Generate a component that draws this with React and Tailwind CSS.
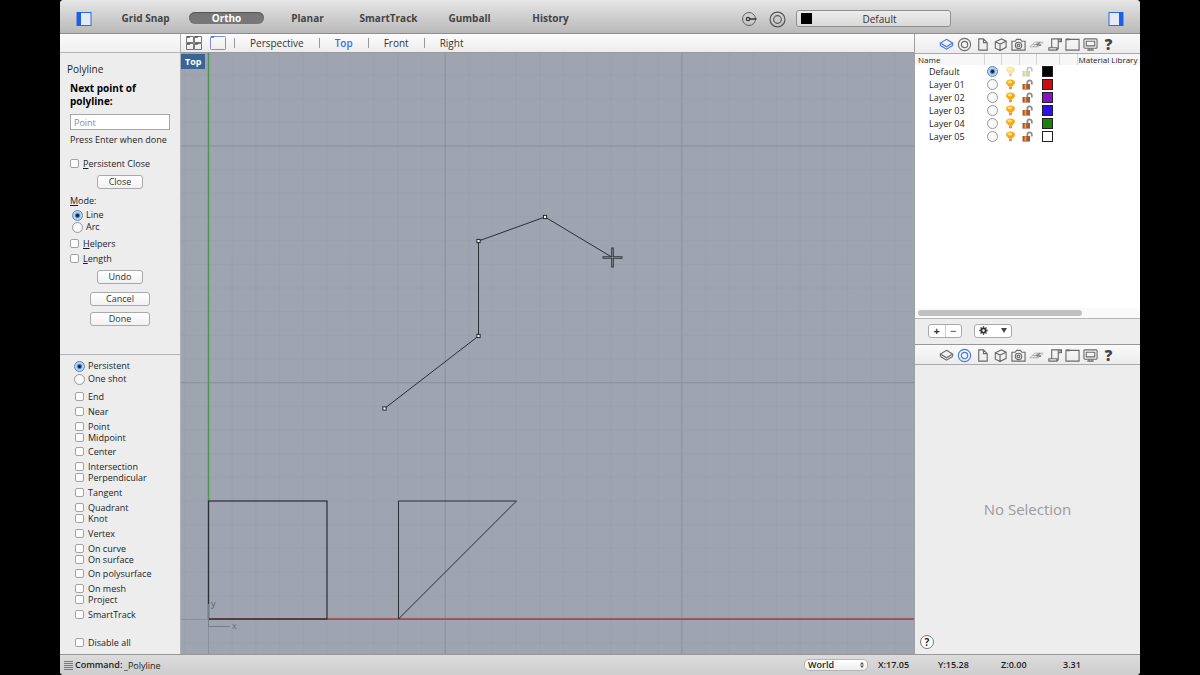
import React, { Fragment } from "react";

const MODES = ["Grid Snap", "Ortho", "Planar", "SmartTrack", "Gumball", "History"];
const VIEWS = ["Perspective", "Top", "Front", "Right"];
const SNAP_GROUPS = [
  ["End"],
  ["Near"],
  ["Point", "Midpoint"],
  ["Center"],
  ["Intersection", "Perpendicular"],
  ["Tangent"],
  ["Quadrant", "Knot"],
  ["Vertex"],
  ["On curve", "On surface"],
  ["On polysurface"],
  ["On mesh", "Project"],
  ["SmartTrack"],
];
const LAYERS = [
  { name: "Default", swatch: "bg-black" },
  { name: "Layer 01", swatch: "bg-[#cc0d10]" },
  { name: "Layer 02", swatch: "bg-[#8614c4]" },
  { name: "Layer 03", swatch: "bg-[#2b12ea]" },
  { name: "Layer 04", swatch: "bg-[#1f8010]" },
  { name: "Layer 05", swatch: "bg-white" },
];

const CHECK =
  "m-0 size-[9px] shrink-0 appearance-none rounded-[2px] border border-[#a2a2a2] bg-white checked:bg-[#6fa5e4]";
const RADIO =
  "m-0 size-[11px] shrink-0 appearance-none rounded-full border border-[#9a9a9a] bg-[radial-gradient(circle,#fff,#f1f1f1)] checked:border-[#5d86b8] checked:bg-[radial-gradient(circle,#10233f_0_1px,#a9d0f8_3px,#c4e0fb_6px)]";
const PUSH =
  "rounded-[3px] border border-[#a9a9a9] bg-linear-to-b from-white to-[#f1f1f1] text-center text-[9px] leading-[12px] text-[#333]";

function Check({ id, label, accessKey }) {
  return (
    <label htmlFor={id} className="flex h-[11px] items-center gap-[4px]">
      <input id={id} type="checkbox" className={CHECK} />
      <span className="whitespace-nowrap leading-[11px]">
        {accessKey ? <span className="underline">{label[0]}</span> : label[0]}
        {label.slice(1)}
      </span>
    </label>
  );
}

function Radio({ id, name, label, checked }) {
  return (
    <label htmlFor={id} className="flex h-[12px] items-center gap-[3px]">
      <input id={id} name={name} type="radio" defaultChecked={checked} className={RADIO} />
      <span className="leading-[12px]">{label}</span>
    </label>
  );
}

function SidebarIcon({ right }) {
  return (
    <svg className="block size-[16px]" viewBox="0 0 16 16" aria-hidden="true">
      <rect x="1" y="1.5" width="14" height="13" fill="#e4ebf7" stroke="#2c6ae0" />
      <rect x={right ? 11 : 1} y="1" width="4" height="14" fill="#1d5fe6" />
    </svg>
  );
}

function Target({ className }) {
  return (
    <svg className={className} viewBox="0 0 16 16" fill="none" stroke="currentColor" strokeWidth="1.1" aria-hidden="true">
      <circle cx="8" cy="8" r="7" />
      <circle cx="8" cy="8" r="3.6" />
    </svg>
  );
}

const PANEL_ICONS = [
  ["Layers", <><path d="M8 2.5 14.5 6.5 8 10.5 1.5 6.5Z" /><path d="M1.5 9 8 13 14.5 9M1.5 6.5V9M14.5 6.5V9" /></>],
  ["Properties", <><circle cx="8" cy="8" r="6.5" /><circle cx="8" cy="8" r="3.4" /></>],
  ["Notes", <path d="M4 2H9L13 6V14H4ZM9 2V6H13" />],
  ["Blocks", <path d="M2.5 5 9 2 14 4.5V11L7.5 14.5 2.5 12ZM2.5 5 7.5 7.5 14 4.5M7.5 7.5V14.5" />],
  ["Named views", <><path d="M1 4.5H4.5L6 2.5H10L11.5 4.5H15V14H1Z" /><circle cx="8" cy="9" r="3.4" /><circle cx="8" cy="9" r="1.4" /></>],
  ["Construction planes", <><path d="M1 10.5 6 5.5H15L10 10.5ZM4.5 10.5 9.5 5.5M7.5 10.5 12.5 5.5M3.5 8H12.5" strokeWidth="0.9" opacity="0.5" /><path d="M8 8.5 11.5 5.5M8 8.5 13 9" strokeWidth="1.3" opacity="0.8" /></>],
  ["Layouts", <path d="M14 5V2H5V11.5H2V14H10.5V11.5H5M10.5 14 12 12.5V2M14 2H15.5V5H12" />],
  ["Viewport", <><path d="M1 2.5H15V14H1Z" /><path d="M1.5 2.5H5" strokeWidth="2" /></>],
  ["Display", <><rect x="1" y="2" width="14" height="10" rx="1" /><path d="M3.5 4.5H12.5V9.5H3.5ZM4.5 14H11.5M6.5 12V14M9.5 12V14" /></>],
  ["Help", null],
];

function PanelTabs({ active }) {
  return (
    <nav className="flex h-[20px] items-center justify-center border-b border-[#a9a9a9] bg-linear-to-b from-[#fafafa] to-[#ececee] pt-px">
      {PANEL_ICONS.map(([name, art]) => (
        <button
          key={name}
          type="button"
          aria-label={name}
          className={`flex h-[18px] w-[18px] items-center justify-center ${active === name ? "text-[#3f7be0]" : "text-[#6a6a6a]"}`}
        >
          {art ? (
            <svg className="block size-[15px]" viewBox="0 0 16 16" fill="none" stroke="currentColor" strokeWidth="1.2">
              {art}
            </svg>
          ) : (
            <span className="text-[15px] font-extrabold leading-[16px] text-[#444]">?</span>
          )}
        </button>
      ))}
    </nav>
  );
}

function Bulb({ dim }) {
  return (
    <svg className={`mx-auto block size-[11px] ${dim ? "opacity-50" : ""}`} viewBox="0 0 11 11" aria-hidden="true">
      <path d="M5.5 0.5C8.4 0.5 10 2 10 3.8 10 5.6 7.7 6.3 7.4 7.6H3.6C3.3 6.3 1 5.6 1 3.8 1 2 2.6 0.5 5.5 0.5Z" fill={dim ? "#f0cf5c" : "#f5a81c"} />
      <ellipse cx="4.8" cy="3" rx="2.4" ry="1.4" fill="#ffdf6b" />
      <path d="M4 7.6H7V9.2L6 10.6H5L4 9.2Z" fill="#d99a55" />
    </svg>
  );
}

function Lock({ dim }) {
  return (
    <svg className={`mx-auto block size-[11px] ${dim ? "opacity-50" : ""}`} viewBox="0 0 11 11" aria-hidden="true">
      <path d="M5.4 5V3.4C5.4 0.6 9.8 0.6 9.8 3.4V5.4" fill="none" stroke="#8b8b8b" strokeWidth="1.8" />
      <rect x="0.5" y="5" width="7.5" height="5.6" fill={dim ? "#b5a36a" : "#a95a28"} />
      <path d="M3.4 5.2V10.4" stroke={dim ? "#d8cc98" : "#e5a463"} strokeWidth="1.6" />
    </svg>
  );
}

const steps = (origin, size, limit) => {
  const out = [];
  for (let i = -10; i < 90; i++) {
    const at = origin + i * size;
    if (at >= 0 && at <= limit) out.push({ at, major: i % 10 === 0 });
  }
  return out;
};
const VERTICALS = steps(27.5, 23.67, 2000);
const HORIZONTALS = steps(-143.7, 23.67, 2000);
const POINTS = [[203.5, 355.5], [297.5, 283], [297.5, 188], [364, 164]];

function Viewport() {
  return (
    <svg className="absolute inset-0 block h-full w-full" role="img" aria-label="Top viewport drawing">
      {VERTICALS.map((l) => (
        <line key={l.at} x1={l.at} x2={l.at} y1="0" y2="100%" stroke={l.major ? "#858d98" : "#989fab"} opacity={l.major ? 0.85 : 0.5} />
      ))}
      {HORIZONTALS.map((l) => (
        <line key={l.at} y1={l.at} y2={l.at} x1="0" x2="100%" stroke={l.major ? "#858d98" : "#989fab"} opacity={l.major ? 0.85 : 0.5} />
      ))}
      <line x1="27.5" x2="27.5" y1="0" y2="566" stroke="#4d9650" strokeWidth="1.5" />
      <line x1="27" x2="100%" y1="566" y2="566" stroke="#a53c48" strokeWidth="1.4" />
      <g fill="none" stroke="#2a2e35">
        <rect x="27.5" y="448" width="118.5" height="118" strokeWidth="1.2" />
        <path d="M217.5 448H335.5L217.5 566Z" />
        <path d="M203.5 355.5 297.5 283V188L364 164 431.5 204.5" />
      </g>
      {POINTS.map(([x, y]) => (
        <rect key={x + "-" + y} x={x - 1.6} y={y - 1.6} width="3.2" height="3.2" fill="#fff" stroke="#22262c" />
      ))}
      <path d="M421.5 204.5H441.5M431.5 194.5V214.5" stroke="#33373d" strokeWidth="2.6" />
      <path d="M422.5 204.5H440.5M431.5 195.5V213.5" stroke="#8d939d" strokeWidth="0.7" />
      <path d="M27.5 551V573.5H49" fill="none" stroke="#777d88" />
      <text x="30" y="554" fontSize="9" fill="#5c626c">y</text>
      <text x="51" y="576" fontSize="9" fill="#686e78">x</text>
    </svg>
  );
}

function CommandPanel() {
  return (
    <section className="flex flex-col pt-[9px] pb-[28px]">
      <h1 className="pl-[7px] text-[10px] leading-[14px]">Polyline</h1>
      <div className="flex flex-col px-[10px]">
        <label htmlFor="pt" className="pt-[6px] text-[10px] font-bold leading-[13px] text-black">
          Next point of polyline:
        </label>
        <input
          id="pt"
          placeholder="Point"
          className="mt-[6px] h-[16px] w-full border border-[#a8a8a8] bg-white px-[3px] text-[9px] leading-[12px] placeholder:text-[#8a8a8a]"
        />
        <p className="mt-[4px] whitespace-nowrap leading-[12px]">Press Enter when done</p>
        <div className="mt-[12px]">
          <Check id="pclose" label="Persistent Close" accessKey />
        </div>
        <button type="button" className={`${PUSH} mt-[6px] h-[14px] w-[46px] self-center`}>Close</button>
        <fieldset className="mt-[6px]">
          <legend className="leading-[12px]"><span className="underline">M</span>ode:</legend>
          <div className="pt-[2px] pl-[2px]">
            <Radio id="line" name="mode" label="Line" checked />
            <Radio id="arc" name="mode" label="Arc" />
          </div>
        </fieldset>
        <div className="mt-[5px] flex flex-col gap-[4px]">
          <Check id="helpers" label="Helpers" accessKey />
          <Check id="length" label="Length" accessKey />
        </div>
        <button type="button" className={`${PUSH} mt-[6px] h-[14px] w-[46px] self-center`}>Undo</button>
        <button type="button" className={`${PUSH} mt-[8px] h-[14px] w-[60px] self-center`}>Cancel</button>
        <button type="button" className={`${PUSH} mt-[6px] h-[14px] w-[60px] self-center`}>Done</button>
      </div>
    </section>
  );
}

function SnapPanel() {
  return (
    <section className="flex flex-1 flex-col border-t border-[#b5b5b5] pt-[5px] pb-[6px] pl-[14px]">
      <div className="flex flex-col gap-[1px]">
        <Radio id="persistent" name="snapmode" label="Persistent" checked />
        <Radio id="oneshot" name="snapmode" label="One shot" />
      </div>
      <div className="mt-[6px] flex flex-1 flex-col justify-between pl-[1px]">
        {SNAP_GROUPS.map((group) => (
          <div key={group[0]}>
            {group.map((s) => (
              <Check key={s} id={"snap-" + s} label={s} />
            ))}
          </div>
        ))}
      </div>
      <div className="mt-[17px] pl-[1px]">
        <Check id="disable" label="Disable all" />
      </div>
    </section>
  );
}

function LayersPanel() {
  const head = "h-[11px] border-r border-[#d5d5d5] p-0 font-medium leading-[10px]";
  return (
    <section className="flex h-[291px] flex-col">
      <div className="flex-1 overflow-hidden bg-white">
        <table className="w-full table-fixed border-collapse text-left leading-[12px]">
          <thead className="bg-[#f7f7f7] text-[8px]">
            <tr>
              <th className={`${head} w-[69px] pl-[3px]`}>Name</th>
              <th className={`${head} w-[17px]`} aria-label="Current" />
              <th className={`${head} w-[18px]`} aria-label="Visible" />
              <th className={`${head} w-[17px]`} aria-label="Locked" />
              <th className={`${head} w-[23px]`} aria-label="Color" />
              <th className={`${head} w-[18px]`} aria-label="Linetype" />
              <th className="h-[11px] whitespace-nowrap p-0 pl-px font-medium leading-[10px]">Material Library</th>
            </tr>
          </thead>
          <tbody>
            {LAYERS.map((layer, i) => (
              <tr key={layer.name} className="h-[13px]">
                <td className="p-0 pl-[14px]">{layer.name}</td>
                <td className="p-0">
                  <input type="radio" name="layer" aria-label={"Make " + layer.name + " current"} defaultChecked={i === 0} className={`${RADIO} mx-auto block`} />
                </td>
                <td className="p-0"><Bulb dim={i === 0} /></td>
                <td className="p-0"><Lock dim={i === 0} /></td>
                <td className="p-0"><span className={`mx-auto block size-[11px] border border-[#222] ${layer.swatch}`} /></td>
                <td className="p-0" />
                <td className="p-0" />
              </tr>
            ))}
          </tbody>
        </table>
      </div>
      <div className="h-[11px] border-b border-[#b5b5b5] bg-[#fafafa] px-[3px] pt-[2px]">
        <div className="h-[6px] w-3/4 rounded-full bg-[#c1c1c1]" />
      </div>
      <div className="flex h-[26px] items-center gap-[12px] border-b border-[#999] px-[13px] pb-[2px]">
        <div className="flex h-[14px] w-[34px] rounded-[3px] border border-[#a9a9a9] bg-white text-[11px] font-bold leading-[11px] text-[#333]">
          <button type="button" aria-label="Add layer" className="flex-1 border-r border-[#ccc]">+</button>
          <button type="button" aria-label="Remove layer" className="flex-1 text-[#777]">−</button>
        </div>
        <button type="button" aria-label="Layer actions" className="flex h-[14px] w-[38px] items-center justify-between rounded-[3px] border border-[#a9a9a9] bg-white px-[4px]">
          <svg className="size-[9px]" viewBox="0 0 10 10" stroke="#333" fill="none" aria-hidden="true">
            <circle cx="5" cy="5" r="2.4" strokeWidth="2" />
            <path d="M5 0.3V2M5 8V9.7M0.3 5H2M8 5H9.7M1.7 1.7 2.9 2.9M7.1 7.1 8.3 8.3M1.7 8.3 2.9 7.1M7.1 2.9 8.3 1.7" strokeWidth="1.5" />
          </svg>
          <svg className="h-[5px] w-[6px]" viewBox="0 0 6 5" aria-hidden="true"><path d="M0 0H6L3 5Z" fill="#444" /></svg>
        </button>
      </div>
    </section>
  );
}

export default function App() {
  return (
    <div className="min-h-screen bg-black px-[5%] font-['Open_Sans','Noto_Sans',sans-serif] text-[9px] font-medium text-[#1c1c1c]">
      <div className="flex min-h-screen flex-col overflow-hidden rounded-[4px] bg-[#ededee]">
        <header className="flex h-[34px] items-center border-b border-[#8e8e8e] bg-linear-to-b from-[#e6e6e6] to-[#b9b9b9] px-[16px] pt-[4px]">
          <button type="button" aria-label="Toggle left sidebar"><SidebarIcon /></button>
          <div className="ml-[16px] flex gap-[6px] pb-px">
            {MODES.map((m) => (
              <button
                key={m}
                type="button"
                className={`h-[12px] w-[75px] rounded-full text-center text-[10px] font-bold leading-[12px] ${m === "Ortho" ? "bg-[#777] text-white shadow-[inset_0_1px_1px_#555]" : "text-[#444]"}`}
              >
                {m}
              </button>
            ))}
          </div>
          <div className="ml-auto flex items-center gap-[12px] text-[#555]">
            <button type="button" aria-label="Record history" className="pt-[1px]">
              <svg className="block size-[16px]" viewBox="0 0 16 16" fill="none" stroke="currentColor" aria-hidden="true">
                <circle cx="8" cy="8" r="6.5" strokeWidth="0.9" />
                <circle cx="7" cy="8" r="1.7" strokeWidth="1.2" stroke="#333" />
                <path d="M9 8H15.5" strokeWidth="1.5" stroke="#333" />
              </svg>
            </button>
            <div className="flex items-center gap-[10px]">
              <button type="button" aria-label="Object properties" className="pt-[1px]"><Target className="block size-[17px]" /></button>
              <div className="relative">
                <select aria-label="Current layer" className="block h-[17px] w-[155px] appearance-none rounded-[3px] border border-[#8f8f8f] bg-linear-to-b from-[#ececec] to-[#d9d9d9] pl-[12px] text-center text-[10px] leading-[14px] text-[#333] [text-align-last:center]">
                  <option>Default</option>
                </select>
                <span className="pointer-events-none absolute top-[3px] left-[5px] size-[11px] bg-black" />
              </div>
            </div>
          </div>
          <button type="button" aria-label="Toggle right sidebar" className="ml-[157px]"><SidebarIcon right /></button>
        </header>

        <div className="flex flex-1">
          <aside className="flex w-[121px] shrink-0 flex-col border-r border-[#b0b0b4]">
            <div className="h-[19px] border-b border-[#b5b5b5] bg-linear-to-b from-[#fafafa] to-[#f0f0f1]" />
            <CommandPanel />
            <SnapPanel />
          </aside>

          <main className="flex min-w-0 flex-1 flex-col">
            <nav className="flex h-[19px] items-center border-b border-[#9a9a9a] bg-linear-to-b from-[#fdfdfd] to-[#ececee] pl-[5px] text-[10px] leading-[14px] text-[#333]">
              <button type="button" aria-label="Four viewports" className="mr-[8px]">
                <svg className="block h-[14px] w-[16px]" viewBox="0 0 16 14" fill="none" stroke="#555" aria-hidden="true">
                  <path d="M0.5 0.5H7.5V6.5H0.5ZM8.5 0.5H15.5V6.5H8.5ZM0.5 7.5H7.5V13.5H0.5ZM8.5 7.5H15.5V13.5H8.5Z" strokeWidth="0.8" />
                  <path d="M1 1H4M9 1H12M1 8H4M9 8H12" strokeWidth="1.4" />
                </svg>
              </button>
              <button type="button" aria-label="Single viewport" className="mr-[8px]">
                <svg className="block h-[14px] w-[16px]" viewBox="0 0 16 14" fill="none" stroke="#7a8fe0" aria-hidden="true">
                  <rect x="0.5" y="0.5" width="15" height="13" rx="1" />
                  <path d="M1 1H4" strokeWidth="1.6" stroke="#4b62c8" />
                </svg>
              </button>
              <div className="flex items-center gap-[15px]">
                {VIEWS.map((v) => (
                  <Fragment key={v}>
                    <span className="h-[10px] w-px bg-[#999]" />
                    <button type="button" className={v === "Top" ? "font-semibold text-[#3a6fe0]" : ""}>{v}</button>
                  </Fragment>
                ))}
              </div>
            </nav>
            <div className="relative flex-1 bg-[#9fa5b0]">
              <Viewport />
              <span className="absolute top-[1px] left-0 bg-[#3a6496] px-[4px] text-[9px] font-bold leading-[15px] text-white">Top</span>
            </div>
          </main>

          <aside className="flex w-[226px] shrink-0 flex-col border-l border-[#a0a0a4]">
            <PanelTabs active="Layers" />
            <LayersPanel />
            <PanelTabs active="Properties" />
            <section className="flex flex-1 flex-col">
              <p className="flex flex-1 items-center justify-center pt-[18px] text-[15px] leading-[18px] text-[#9b9b9b]">No Selection</p>
              <button type="button" aria-label="Help" className="mb-[5px] ml-[5px] size-[14px] rounded-full border border-[#777] bg-white text-[10px] font-bold leading-[12px]">?</button>
            </section>
          </aside>
        </div>

        <footer className="flex h-[21px] items-center border-t border-[#999] bg-linear-to-b from-[#dcdcdc] to-[#cdcdcd] pl-[4px] text-[9px] font-semibold">
          <svg className="mr-[2px] block size-[9px]" viewBox="0 0 9 9" stroke="#777" aria-hidden="true">
            <path d="M0 0.5H9M0 2.5H9M0 4.5H9M0 6.5H9M0 8.5H9" />
          </svg>
          <label htmlFor="cmd" className="w-[49px]">Command:</label>
          <input id="cmd" defaultValue="_Polyline" className="h-[14px] min-w-0 flex-1 bg-transparent font-medium" />
          <div className="relative">
            <select aria-label="Coordinate system" className="block h-[12px] w-[64px] appearance-none rounded-[5px] border border-[#b5b5b5] bg-linear-to-b from-white to-[#eee] pl-[3px] text-[9px] leading-[10px]">
              <option>World</option>
            </select>
            <svg className="pointer-events-none absolute top-[3px] right-[4px] h-[6px] w-[4px]" viewBox="0 0 4 6" fill="#555" aria-hidden="true">
              <path d="M0 2.4 2 0 4 2.4ZM0 3.6H4L2 6Z" />
            </svg>
          </div>
          <output className="ml-[10px] w-[60px]">X:17.05</output>
          <output className="w-[63px]">Y:15.28</output>
          <output className="w-[62px]">Z:0.00</output>
          <output className="w-[77px]">3.31</output>
        </footer>
      </div>
    </div>
  );
}
